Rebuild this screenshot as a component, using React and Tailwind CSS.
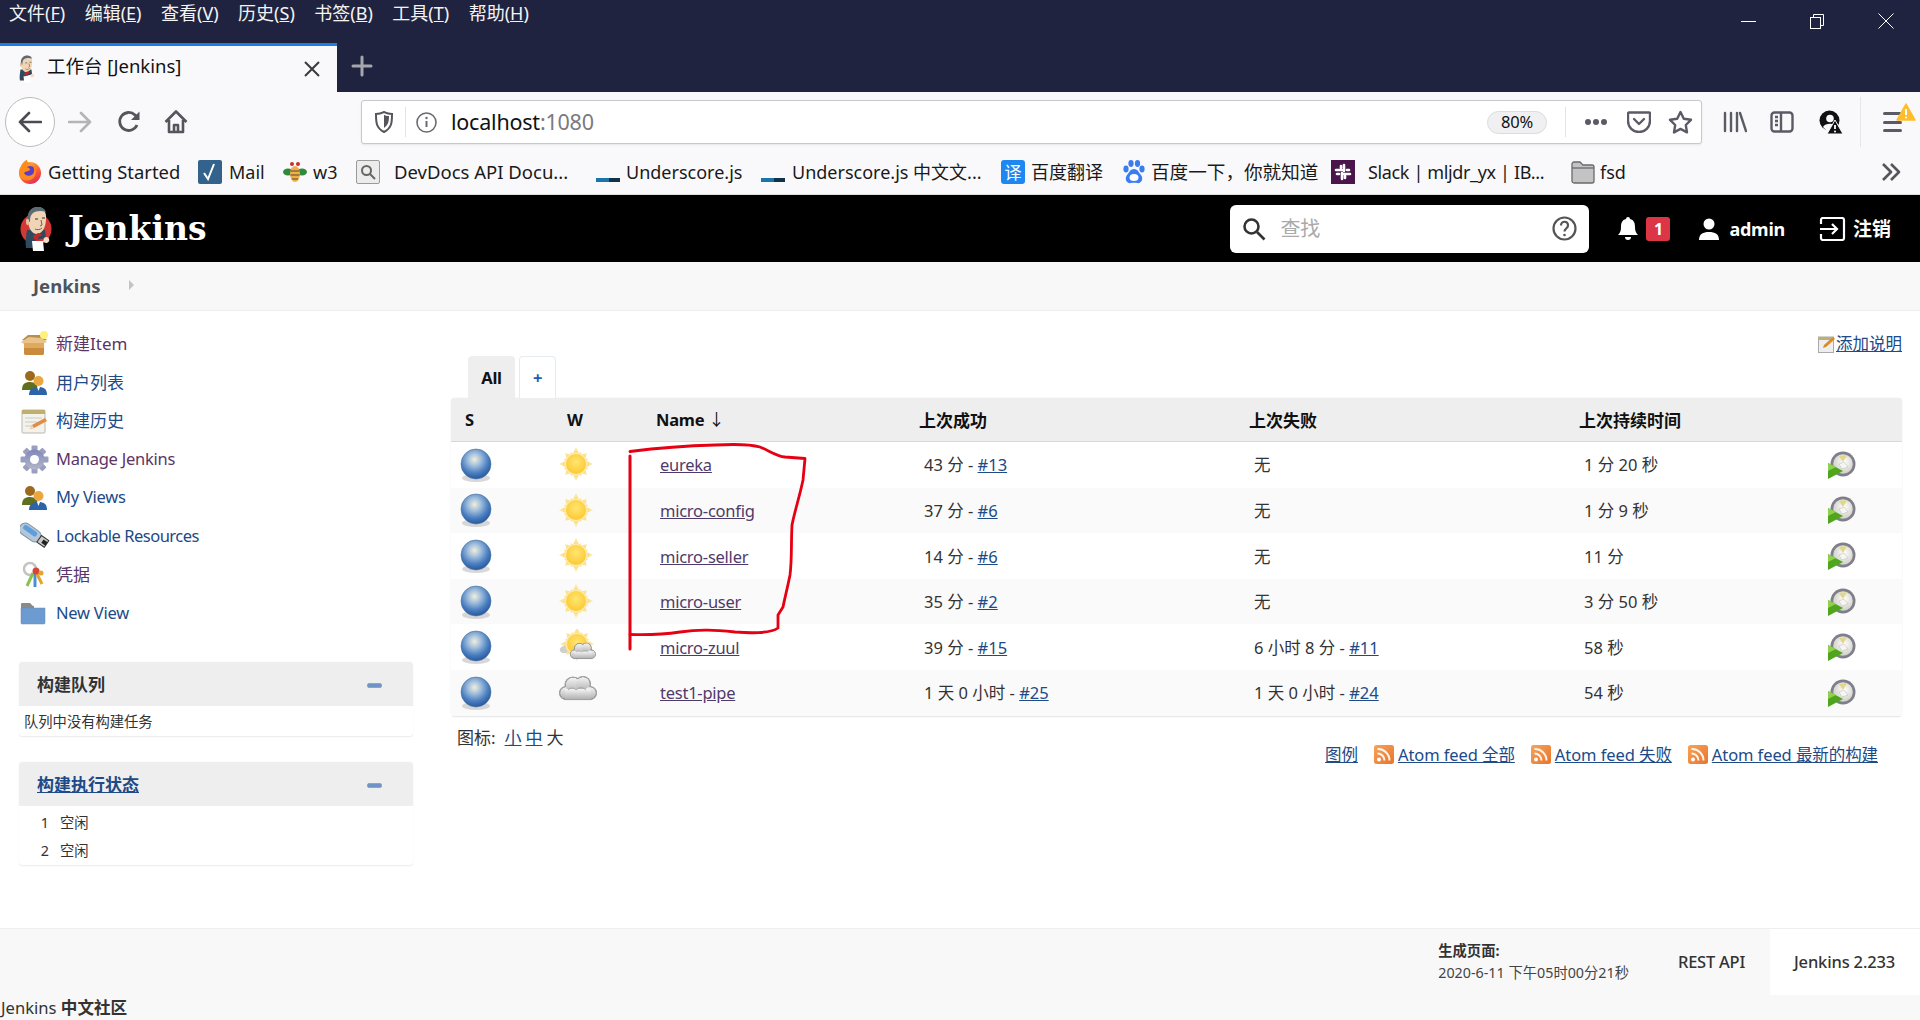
import React from "react";

const Ball = () => (
  <svg width="32" height="36" viewBox="0 0 32 36" className="shrink-0">
    <defs>
      <radialGradient id="ballG" cx="45%" cy="35%" r="65%">
        <stop offset="0" stopColor="#f1efd9" />
        <stop offset="0.3" stopColor="#a9c3de" />
        <stop offset="0.7" stopColor="#4a7fc0" />
        <stop offset="1" stopColor="#28589c" />
      </radialGradient>
    </defs>
    <ellipse cx="16" cy="30" rx="14" ry="4" fill="#b8b8b8" opacity="0.55" />
    <circle cx="16" cy="16" r="15" fill="url(#ballG)" stroke="#47729f" strokeWidth="0.6" />
  </svg>
);

const SunShape = ({ cx = 17, cy = 17 }) => (
  <g transform={`translate(${cx} ${cy})`}>
    {[0, 45, 90, 135, 180, 225, 270, 315].map((a) => (
      <polygon key={a} points={a % 90 === 0 ? "-4,-8 0,-17.500 4,-8" : "-4,-8 0,-15.500 4,-8"} fill="url(#rayG)" transform={`rotate(${a})`} />
    ))}
    {[22, 67, 112, 157, 202, 247, 292, 337].map((a) => (
      <polygon key={a} points="-3,-8 0,-13 3,-8" fill="url(#rayG)" transform={`rotate(${a})`} />
    ))}
    <circle r="11.500" fill="#fde9a8" />
    <circle r="10" fill="url(#sunG)" />
  </g>
);

const SunDefs = () => (
  <defs>
    <radialGradient id="sunG" cx="50%" cy="40%" r="60%">
      <stop offset="0" stopColor="#ffe671" />
      <stop offset="1" stopColor="#fcc933" />
    </radialGradient>
    <radialGradient id="rayG" gradientUnits="userSpaceOnUse" cx="0" cy="0" r="17.500">
      <stop offset="0.55" stopColor="#fcd766" />
      <stop offset="1" stopColor="#fdf1cd" />
    </radialGradient>
    <linearGradient id="cloudG" x1="0" y1="0" x2="0" y2="1">
      <stop offset="0" stopColor="#f4f4f4" />
      <stop offset="1" stopColor="#b2b2b2" />
    </linearGradient>
  </defs>
);

const Sun = () => (
  <svg width="34" height="35" viewBox="0 0 34 35" className="shrink-0">
    <SunDefs />
    <SunShape />
  </svg>
);

const Puffs = ({ scale = 1, x = 0, y = 0 }) => (
  <g transform={`translate(${x} ${y}) scale(${scale})`}>
    <g stroke="#a3a3a3" strokeWidth="1.200">
      <circle cx="7" cy="18" r="6.500" />
      <circle cx="14" cy="10" r="8" />
      <circle cx="24" cy="9" r="7.500" />
      <circle cx="31" cy="18" r="6.500" />
      <rect x="6" y="17" width="26" height="7.500" />
    </g>
    <g fill="url(#cloudG)">
      <circle cx="7" cy="18" r="6" />
      <circle cx="14" cy="10" r="7.500" />
      <circle cx="24" cy="9" r="7" />
      <circle cx="31" cy="18" r="6" />
      <rect x="6" y="14" width="26" height="10" />
    </g>
    <path d="M9 15c3-3 6-2 8 0 3-3 7-3 10 0" fill="none" stroke="#9a9a9a" strokeWidth="0.800" />
  </g>
);

const Cloudy = () => (
  <svg width="38" height="36" viewBox="0 0 38 36" className="shrink-0">
    <SunDefs />
    <path d="M1 22c-1-3 2-5 5-5 2-2 5-1 6 1l-3 6H3z" fill="#cfcfcf" />
    <SunShape cx="18" cy="15" />
    <Puffs x="11" y="13" scale="0.680" />
  </svg>
);

const Cloud = () => (
  <svg width="38" height="36" viewBox="0 0 38 36" className="shrink-0">
    <SunDefs />
    <Puffs />
  </svg>
);

const BuildIcon = () => (
  <svg width="28" height="28" viewBox="0 0 28 28" className="shrink-0">
    <defs>
      <radialGradient id="clkG" cx="55%" cy="40%" r="60%">
        <stop offset="0" stopColor="#ffffff" />
        <stop offset="1" stopColor="#cfcfc6" />
      </radialGradient>
    </defs>
    <circle cx="15" cy="13" r="12.500" fill="#7f7f8c" />
    <circle cx="15" cy="13" r="9.800" fill="url(#clkG)" />
    <polygon points="11,5 19,4 15,11" fill="#e2d68a" />
    <polygon points="11,13 16,11 20,16 14,18" fill="#f7f7f2" stroke="#a8a8a8" strokeWidth="0.400" />
    <polygon points="0,12 15,20 0,28" fill="#4fa51c" />
    <polygon points="0,12 8,16 0,20" fill="#8fd14d" />
  </svg>
);

const BoxIcon = () => (
  <svg width="28" height="26" viewBox="0 0 28 26">
    <path d="M2 9 8 4h14l5 5-13 3z" fill="#b98d50" />
    <path d="M1 11 9 6l12 1 6 4-5 2H4z" fill="#e8c48c" />
    <path d="M4 12h20v10a2 2 0 0 1-2 2H6a2 2 0 0 1-2-2z" fill="#e0a95c" />
    <path d="M4 17h20v5a2 2 0 0 1-2 2H6a2 2 0 0 1-2-2z" fill="#c98b3e" />
    <circle cx="24" cy="4" r="4" fill="#fff27a" />
  </svg>
);

const UsersIcon = () => (
  <svg width="28" height="26" viewBox="0 0 28 26">
    <circle cx="10" cy="6" r="5" fill="#9c6a1e" />
    <path d="M2 20c0-6 3-8 8-8s8 3 8 8z" fill="#5f6e1f" />
    <circle cx="18.500" cy="11" r="5" fill="#eaa640" />
    <path d="M9 25c0-6 4-8 9.500-8S27 19 27 25z" fill="#2d64a8" />
    <path d="m17 17 1.500 4 1.500-4z" fill="#fff" />
  </svg>
);

const NoteIcon = () => (
  <svg width="28" height="26" viewBox="0 0 28 26">
    <rect x="2" y="2" width="23" height="23" rx="1" fill="#f3f3ec" stroke="#b9b9b0" />
    <rect x="2" y="2" width="23" height="4" fill="#c0b070" />
    <path d="M5 10h17M5 14h12M5 18h9" stroke="#c9c9c9" />
    <path d="m10 21 2-4 13-7 2 3-13 7z" fill="#e08c45" />
    <path d="m10 21 2-4 2 3z" fill="#f5d9b5" />
  </svg>
);

const GearIcon = () => (
  <svg width="29" height="29" viewBox="0 0 29 29">
    <defs>
      <linearGradient id="gearG" x1="0" y1="0" x2="0" y2="1">
        <stop offset="0" stopColor="#8087b8" />
        <stop offset="1" stopColor="#b5b6c8" />
      </linearGradient>
    </defs>
    <g transform="translate(14.5 14.5)">
      {[0, 45, 90, 135, 180, 225, 270, 315].map((a) => (
        <rect key={a} x="-3" y="-14" width="6" height="7" rx="1" fill="#9a9fc2" transform={`rotate(${a})`} />
      ))}
      <circle r="10" fill="url(#gearG)" />
      <circle r="4.500" fill="#fff" />
    </g>
  </svg>
);

const UsbIcon = () => (
  <svg width="31" height="28" viewBox="0 0 31 28">
    <g transform="rotate(35 14 12)">
      <rect x="-2" y="7" width="24" height="12" rx="6" fill="#b5c6d6" stroke="#7e94a8" />
      <rect x="1" y="9" width="16" height="5" rx="2.500" fill="#5c9fdc" />
      <rect x="21" y="9" width="9" height="8" fill="#c9c9c9" stroke="#333" />
      <rect x="25" y="11" width="5" height="4" fill="#222" />
    </g>
  </svg>
);

const KeysIcon = () => (
  <svg width="28" height="28" viewBox="0 0 28 28">
    <circle cx="10" cy="8" r="6" fill="none" stroke="#c4c4c4" strokeWidth="2.500" />
    <path d="M13 12 7 25" stroke="#8ac24a" strokeWidth="3" />
    <path d="m15 12 0 14" stroke="#4a90d9" strokeWidth="3" />
    <path d="m16 11 6 12" stroke="#e5a32f" strokeWidth="3" />
    <circle cx="16" cy="10" r="3.500" fill="#d9443a" />
    <circle cx="21" cy="12" r="2.500" fill="#e5a32f" />
  </svg>
);

const FolderIcon = () => (
  <svg width="26" height="24" viewBox="0 0 26 24">
    <path d="M1 3a1 1 0 0 1 1-1h8l3 3h1v5H1z" fill="#8a8a8a" />
    <path d="M1 7h24v15a1 1 0 0 1-1 1H2a1 1 0 0 1-1-1z" fill="#6c9bd1" stroke="#6f88a5" strokeWidth="0.500" />
  </svg>
);

const Rss = () => (
  <svg width="20" height="19" viewBox="0 0 20 19" className="shrink-0">
    <defs>
      <linearGradient id="rssG" x1="0" y1="0" x2="1" y2="1">
        <stop offset="0" stopColor="#f7a35a" />
        <stop offset="1" stopColor="#e8752a" />
      </linearGradient>
    </defs>
    <rect width="20" height="19" rx="2.500" fill="url(#rssG)" />
    <circle cx="5" cy="14.500" r="2" fill="#fff" />
    <path d="M3.500 8.500a7 7 0 0 1 7 7M3.500 4a11.500 11.500 0 0 1 12 11.500" fill="none" stroke="#fff" strokeWidth="2" opacity="0.9" />
  </svg>
);

const Minus = () => <span className="block w-[15px] h-[5px] mt-[3px] rounded-[2px] bg-[#6f93c6] border border-[#8aa5cc]" />;

const JenkinsLogo = ({ w = 32, h = 46, noCircle = false }) => (
  <svg width={w} height={h} viewBox="0 0 32 46" className="shrink-0">
    {!noCircle && <circle cx="16" cy="23" r="15.500" fill="#d33833" />}
    <path d="M7 24c-1 6-2 12-1 18h8l2-8 10-2-1-8z" fill="#2f4a5e" />
    <path d="M8 13C8 5 13 1 18 1s9 5 8 13c-.500 7-3 13-9 14-6 0-9-7-9-15z" fill="#efd4b5" />
    <path d="M8 15C6 6 12 0 18 1c4 0 7 2 8 5-5-2-12-1-14 2-2 2-2 5-2 8z" fill="#5d6b74" />
    <path d="M6 15c0-3 3-3 3 0s-1 5-2 4-1-2-1-4z" fill="#e6c2a0" />
    <path d="M15 13h3M22 12h3" stroke="#333" strokeWidth="1" />
    <path d="M21 14l1 5-2 1M15 23c2 1 5 1 7-1" stroke="#7a5a45" strokeWidth="1" fill="none" />
    <path d="m13 30 5-3 5 2-5 2 1 4-5-2z" fill="#c0282d" />
    <path d="M12 35h11l1 10H13z" fill="#fff" />
    <path d="M24 32c2-2 5-1 5 1 1 2-1 4-3 4l-3-1z" fill="#f2dcc4" />
  </svg>
);

const ArrowL = ({ color = "#4b4b55" }) => (
  <svg width="24" height="24" viewBox="0 0 24 24" fill="none" stroke={color} strokeWidth="2.600" strokeLinecap="round" strokeLinejoin="round">
    <path d="M23 12H2M11 3l-9 9 9 9" />
  </svg>
);
const ArrowR = () => (
  <svg width="24" height="24" viewBox="0 0 24 24" fill="none" stroke="#b4b4b8" strokeWidth="2.600" strokeLinecap="round" strokeLinejoin="round">
    <path d="M1 12h21M13 3l9 9-9 9" />
  </svg>
);
const Reload = () => (
  <svg width="24" height="24" viewBox="0 0 24 24" fill="none" stroke="#55555c" strokeWidth="2.800">
    <path d="M20 15a9 9 0 1 1-2-10l3 3" />
    <path d="M22.500 1.500V10H14z" fill="#55555c" stroke="none" />
  </svg>
);
const HomeI = () => (
  <svg width="24" height="24" viewBox="0 0 24 24" fill="none" stroke="#55555c" strokeWidth="2.600" strokeLinejoin="round">
    <path d="M1.500 12 12 1.500 22.500 12M5 10v12h14V10" />
    <path d="M10 22v-7h4v7" />
  </svg>
);
const ShieldI = () => (
  <svg width="18" height="22" viewBox="0 0 18 22">
    <path d="M1 3c5 0 6-1 8-2 2 1 3 2 8 2 0 8 0 14-8 18C1 17 1 11 1 3z" fill="none" stroke="#55555c" strokeWidth="2" />
    <path d="M9 4c1 .5 3 1 5 1 0 6-1 9-5 12z" fill="#55555c" />
  </svg>
);
const InfoI = () => (
  <svg width="21" height="21" viewBox="0 0 21 21" fill="none" stroke="#6a6a70" strokeWidth="1.600">
    <circle cx="10.500" cy="10.500" r="9.500" />
    <path d="M10.500 9v6" strokeWidth="2" />
    <circle cx="10.500" cy="6" r="1.200" fill="#6a6a70" stroke="none" />
  </svg>
);
const Dots = () => (
  <svg width="24" height="8" viewBox="0 0 24 8" fill="#5b5b66">
    <circle cx="4" cy="4" r="3" /><circle cx="12" cy="4" r="3" /><circle cx="20" cy="4" r="3" />
  </svg>
);
const Pocket = () => (
  <svg width="24" height="22" viewBox="0 0 24 22" fill="none" stroke="#5b5b66" strokeWidth="2.400" strokeLinecap="round" strokeLinejoin="round">
    <path d="M2 1.500h20a1 1 0 0 1 1 1V10a11 11 0 0 1-22 0V2.500a1 1 0 0 1 1-1z" />
    <path d="m7 8 5 5 5-5" />
  </svg>
);
const StarI = () => (
  <svg width="25" height="24" viewBox="0 0 25 24" fill="none" stroke="#5b5b66" strokeWidth="2.400" strokeLinejoin="round">
    <path d="m12.500 2 3.300 6.800 7.200 1-5.200 5.200 1.200 7.400-6.500-3.500-6.500 3.500L7.200 15 2 9.800l7.200-1z" />
  </svg>
);
const Library = () => (
  <svg width="24" height="22" viewBox="0 0 24 22" fill="none" stroke="#5b5b66" strokeWidth="2.400" strokeLinecap="round">
    <path d="M2 2v18M8 2v18M14 2v18M17 2l6 18" />
  </svg>
);
const SidebarI = () => (
  <svg width="24" height="22" viewBox="0 0 24 22" fill="none" stroke="#5b5b66" strokeWidth="2.400">
    <rect x="1.500" y="1.500" width="21" height="19" rx="3" />
    <path d="M11 2v18M5 6h3M5 10h3M5 14h3" />
  </svg>
);
const AccountWarn = () => (
  <svg width="24" height="24" viewBox="0 0 24 24">
    <circle cx="10.500" cy="10.500" r="10" fill="#111" />
    <circle cx="11" cy="8.500" r="3.800" fill="#f9f9fb" />
    <path d="M4 17c2-4 11-4 13-1l-3 5H8z" fill="#f9f9fb" />
    <path d="m16 10 8 14H8z" fill="#111" stroke="#f9f9fb" strokeWidth="1" />
    <path d="M16 15v4" stroke="#fff" strokeWidth="1.800" />
    <circle cx="16" cy="21.500" r="1" fill="#fff" />
  </svg>
);
const Hamburger = () => (
  <div className="relative w-[19px] h-[20px] flex flex-col justify-between">
    <span className="block h-[3px] bg-[#5b5b66] rounded-sm" />
    <span className="block h-[3px] bg-[#5b5b66] rounded-sm" />
    <span className="block h-[3px] bg-[#5b5b66] rounded-sm" />
    <svg width="20" height="18" viewBox="0 0 20 18" className="absolute left-[13px] top-[-9px]">
      <path d="M10 1 19 17H1z" fill="#ffbd2e" stroke="#ffbd2e" strokeWidth="1.500" strokeLinejoin="round" />
      <path d="M10 6v6" stroke="#fff" strokeWidth="2" />
      <circle cx="10" cy="14.500" r="1.100" fill="#fff" />
    </svg>
  </div>
);

const Firefox = () => (
  <svg width="22" height="24" viewBox="0 0 22 24">
    <defs>
      <linearGradient id="ffG" x1="0.2" y1="0" x2="0.8" y2="1">
        <stop offset="0" stopColor="#ffbd2e" />
        <stop offset="0.5" stopColor="#ff6a2e" />
        <stop offset="1" stopColor="#e0245e" />
      </linearGradient>
    </defs>
    <circle cx="11" cy="13" r="11" fill="url(#ffG)" />
    <circle cx="11" cy="12" r="6" fill="#5b3ec8" />
    <path d="M2 6c2-4 5-6 6-6 0 3 3 3 5 5-3-1-5 0-6 2 2 0 4 1 4 3-2 2-5 1-6 3 1 3 6 4 9 1 2-3 1-6 0-9 3 3 4 7 2 11-3 5-10 6-14 2C-1 15 0 9 2 6z" fill="#ff8a1e" />
  </svg>
);
const MailI = () => (
  <span className="flex items-center justify-center w-[24px] h-[24px] bg-[#33628c] rounded-[2px]">
    <svg width="16" height="18" viewBox="0 0 16 18" fill="none" stroke="#fff" strokeWidth="2"><path d="m2 10 4 6 6-15" /></svg>
  </span>
);
const Bee = () => (
  <svg width="24" height="22" viewBox="0 0 24 22">
    <ellipse cx="5" cy="11" rx="5" ry="3.500" fill="#2f8a3c" />
    <ellipse cx="19" cy="11" rx="5" ry="3.500" fill="#2f8a3c" />
    <ellipse cx="12" cy="13" rx="5" ry="8" fill="#efb04a" />
    <path d="M7.500 10h9M7.500 14h9M9 18h6" stroke="#8a6a3a" strokeWidth="1.400" />
    <circle cx="9" cy="3" r="2" fill="#c9302c" />
    <circle cx="15" cy="3" r="2" fill="#c9302c" />
  </svg>
);
const DevDocs = () => (
  <span className="flex items-center justify-center w-[24px] h-[24px] bg-[#ececec] border border-[#9a9a9a] rounded-[2px]">
    <svg width="16" height="16" viewBox="0 0 16 16" fill="none" stroke="#666" strokeWidth="2"><circle cx="6.500" cy="6.500" r="4.500" /><path d="m10 10 5 5" /></svg>
  </span>
);
const UnderscoreI = () => (
  <span className="flex w-[24px] h-[4px] mt-[18px] mb-[2px]">
    <span className="w-[13px] h-full bg-[#1a76a8]" />
    <span className="w-[11px] h-full bg-[#123247]" />
  </span>
);
const Translate = () => (
  <span className="flex items-center justify-center w-[24px] h-[24px] bg-[#1e88f0] rounded-[3px] text-white text-[17px] leading-none">译</span>
);
const Paw = () => (
  <svg width="22" height="24" viewBox="0 0 22 24" fill="#3a7df0">
    <ellipse cx="3" cy="9" rx="2.600" ry="3.400" />
    <ellipse cx="8" cy="3.500" rx="2.600" ry="3.400" />
    <ellipse cx="14.500" cy="3.500" rx="2.600" ry="3.400" />
    <ellipse cx="19" cy="9" rx="2.600" ry="3.400" />
    <path d="M11 9c4 0 5 4 7 6 3 4 0 9-4 8-2-.500-4-.500-6 0-4 1-7-4-4-8 2-2 3-6 7-6z" />
    <ellipse cx="11" cy="17.500" rx="4.500" ry="3.500" fill="#fff" />
  </svg>
);
const Slack = () => (
  <span className="flex items-center justify-center w-[24px] h-[24px] bg-[#4a154b]">
    <svg width="18" height="18" viewBox="0 0 18 18" stroke="#fff" strokeWidth="2.600" strokeLinecap="round">
      <path d="M2 7h6M10 2v6M16 11h-6M8 16v-6M13 7h2M5 11H3M11 13v2M7 5V3" />
    </svg>
  </span>
);
const BmFolder = () => (
  <svg width="24" height="24" viewBox="0 0 24 24">
    <path d="M1 4a2 2 0 0 1 2-2h6l3 3h9a2 2 0 0 1 2 2v14a2 2 0 0 1-2 2H3a2 2 0 0 1-2-2z" fill="#c3c3c3" stroke="#6a6a6a" strokeWidth="1.300" />
    <path d="M1 8h22" stroke="#6a6a6a" strokeWidth="1.300" />
  </svg>
);

const menus = [["文件", "F"], ["编辑", "E"], ["查看", "V"], ["历史", "S"], ["书签", "B"], ["工具", "T"], ["帮助", "H"]];

const bookmarks = [
  { c: "w-[179px] gap-[7px] text-[18.4px]", i: <Firefox />, t: "Getting Started" },
  { c: "w-[85px] gap-[7px]", i: <MailI />, t: "Mail" },
  { c: "w-[73px] gap-[6px]", i: <Bee />, t: "w3" },
  { c: "w-[240px] gap-[14px] text-[18.5px]", i: <DevDocs />, t: "DevDocs API Docu..." },
  { c: "w-[165px] gap-[6px]", i: <UnderscoreI />, t: "Underscore.js" },
  { c: "w-[240px] gap-[7px]", i: <UnderscoreI />, t: "Underscore.js 中文文..." },
  { c: "w-[122px] gap-[6px]", i: <Translate />, t: "百度翻译" },
  { c: "w-[208px] gap-[6px] text-[18.6px]", i: <Paw />, t: "百度一下，你就知道" },
  { c: "w-[240px] gap-[13px] tracking-[-0.02em]", i: <Slack />, t: "Slack | mljdr_yx | IB..." },
  { c: "w-[90px] gap-[5px]", i: <BmFolder />, t: "fsd" },
];

const side = [
  { i: <BoxIcon />, t: "新建Item", c: "text-[#5c3566] text-[17px] tracking-normal" },
  { i: <UsersIcon />, t: "用户列表", c: "text-[#204a87] text-[17px] tracking-normal" },
  { i: <NoteIcon />, t: "构建历史", c: "text-[#204a87] text-[17px] tracking-normal" },
  { i: <GearIcon />, t: "Manage Jenkins", c: "text-[#5c3566]" },
  { i: <UsersIcon />, t: "My Views", c: "text-[#204a87]" },
  { i: <UsbIcon />, t: "Lockable Resources", c: "text-[#204a87] tracking-[-0.03em]" },
  { i: <KeysIcon />, t: "凭据", c: "text-[#5c3566] text-[17px] tracking-normal" },
  { i: <FolderIcon />, t: "New View", c: "text-[#204a87]" },
];

const rows = [
  { w: <Sun />, n: "eureka", s: "43 分", sn: "#13", f: "无", fn: "", d: "1 分 20 秒" },
  { w: <Sun />, n: "micro-config", s: "37 分", sn: "#6", f: "无", fn: "", d: "1 分 9 秒" },
  { w: <Sun />, n: "micro-seller", s: "14 分", sn: "#6", f: "无", fn: "", d: "11 分" },
  { w: <Sun />, n: "micro-user", s: "35 分", sn: "#2", f: "无", fn: "", d: "3 分 50 秒" },
  { w: <Cloudy />, n: "micro-zuul", s: "39 分", sn: "#15", f: "6 小时 8 分", fn: "#11", d: "58 秒" },
  { w: <Cloud />, n: "test1-pipe", s: "1 天 0 小时", sn: "#25", f: "1 天 0 小时", fn: "#24", d: "54 秒" },
];

const COLS = "grid grid-cols-[100px_100px_263px_330px_330px_244px_84px]";

export default function App() {
  return (
    <div className="relative w-[1920px] h-[1020px] overflow-hidden bg-white text-[#333] font-['Noto_Sans','Noto_Sans_CJK_SC',sans-serif] text-[16.5px] tracking-[-0.015em]">
      {/* title bar */}
      <div className="h-[92px] bg-[#20233f] flex flex-col">
        <div className="h-[43px] flex items-start text-white">
          <div className="flex gap-[19.5px] pl-[9px] text-[18px] leading-[27px] text-[#f4f4f4] tracking-normal">
            {menus.map(([a, b]) => (
              <span key={b}>{a}(<u>{b}</u>)</span>
            ))}
          </div>
          <div className="ml-auto flex items-center gap-[54px] pr-[26px] pt-[13px]">
            <span className="block w-[15px] h-px bg-white" />
            <svg width="14" height="15" viewBox="0 0 14 15" fill="none" stroke="#fff"><rect x="0.500" y="3.500" width="10" height="11" /><path d="M3.500 3.500v-3h10v11h-3" /></svg>
            <svg width="16" height="16" viewBox="0 0 16 16" fill="none" stroke="#fff"><path d="m.5.5 15 15M15.500.5l-15 15" /></svg>
          </div>
        </div>
        <div className="h-[49px] flex items-stretch">
          <div className="w-[337px] bg-[#f9f9fb] border-t-[3px] border-[#1a7de8] flex items-center pl-[15px] text-[18.5px] text-[#111] tracking-normal">
            <JenkinsLogo w={22} h={28} noCircle />
            <span className="ml-[10px] mb-[7px] whitespace-nowrap">工作台 [Jenkins]</span>
            <svg width="16" height="16" viewBox="0 0 16 16" className="ml-auto mr-[17px]" stroke="#3a3a3a" strokeWidth="2"><path d="m1 1 14 14M15 1 1 15" /></svg>
          </div>
          <div className="flex items-center pl-[14px] pb-[3px]">
            <svg width="22" height="22" viewBox="0 0 22 22" stroke="#a6a6ad" strokeWidth="3" strokeLinecap="round"><path d="M11 2v18M2 11h18" /></svg>
          </div>
        </div>
      </div>

      {/* toolbar */}
      <div className="h-[60px] bg-[#f9f9fb] flex items-center">
        <div className="ml-[5px] w-[50px] h-[50px] rounded-full border border-[#bcbcbc] bg-white flex items-center justify-center"><ArrowL /></div>
        <div className="ml-[13px] w-[24px] flex"><ArrowR /></div>
        <div className="ml-[25px] w-[24px] flex"><Reload /></div>
        <div className="ml-[23px] w-[24px] flex"><HomeI /></div>
        <div className="ml-[173px] w-[1341px] h-[44px] bg-white border border-[#c8c8cc] rounded-[3px] shadow-[0_1px_2px_rgba(0,0,0,0.08)] flex items-center pl-[13px] pr-[8px]">
          <ShieldI />
          <span className="ml-[12px] w-px h-[30px] bg-[#e3e3e3]" />
          <span className="ml-[10px] flex"><InfoI /></span>
          <span className="ml-[14px] text-[21.5px] text-[#111] tracking-[-0.01em]">localhost<span className="text-[#7a7a80]">:1080</span></span>
          <span className="ml-auto w-[60px] h-[23px] rounded-full bg-[#f0f0f2] border border-[#dcdcdc] flex items-center justify-center text-[16.5px] text-[#111]">80%</span>
          <span className="ml-[18px] w-px h-[30px] bg-[#e3e3e3]" />
          <span className="ml-[18px] flex"><Dots /></span>
          <span className="ml-[19px] flex"><Pocket /></span>
          <span className="ml-[17px] flex"><StarI /></span>
        </div>
        <div className="ml-[21px] flex"><Library /></div>
        <div className="ml-[23px] flex"><SidebarI /></div>
        <div className="ml-[25px] flex"><AccountWarn /></div>
        <span className="ml-[17px] w-px h-[50px] bg-[#e6e6e6]" />
        <div className="ml-[22px] flex"><Hamburger /></div>
      </div>

      {/* bookmarks */}
      <div className="h-[43px] bg-[#f9f9fb] border-b border-[#dedede] flex items-center pl-[19px] pb-[2px] text-[18px] text-[#1a1a1a] whitespace-nowrap tracking-normal">
        {bookmarks.map((b) => (
          <div key={b.t} className={`flex items-center shrink-0 ${b.c}`}>
            <span className="flex shrink-0">{b.i}</span>
            <span>{b.t}</span>
          </div>
        ))}
        <svg width="20" height="20" viewBox="0 0 20 20" fill="none" stroke="#55555c" strokeWidth="2.600" strokeLinejoin="round" className="ml-[220px]"><path d="m2 2 8 8-8 8M10 2l8 8-8 8" /></svg>
      </div>

      {/* jenkins header */}
      <header className="h-[67px] bg-black flex items-center text-white pr-[29px]">
        <div className="ml-[20px] flex"><JenkinsLogo /></div>
        <span className="ml-[16px] font-['DejaVu_Serif',serif] font-bold text-[33px] leading-none tracking-normal">Jenkins</span>
        <div className="ml-auto w-[359px] h-[48px] bg-white rounded-[6px] flex items-center pl-[12px] pr-[12px] text-[20px] text-[#aaa]">
          <svg width="24" height="24" viewBox="0 0 24 24" fill="none" stroke="#333" strokeWidth="2.600"><circle cx="9.500" cy="9.500" r="7" /><path d="m15 15 7.500 7.500" /></svg>
          <span className="ml-[14px]">查找</span>
          <svg width="25" height="25" viewBox="0 0 25 25" fill="none" stroke="#555" strokeWidth="2.200" className="ml-auto"><circle cx="12.500" cy="12.500" r="11" /><path d="M9 9.500c0-5 7-5 7 0 0 3-3.500 3-3.500 6" /><circle cx="12.500" cy="19" r="1.300" fill="#555" stroke="none" /></svg>
        </div>
        <svg width="20" height="24" viewBox="0 0 20 24" fill="#fff" className="ml-[29px]"><path d="M10 0a2 2 0 0 1 2 2c4 1 5 4 5 8 0 4 1 6 3 8H0c2-2 3-4 3-8 0-4 1-7 5-8a2 2 0 0 1 2-2z" /><path d="M7 20h6a3 3 0 0 1-6 0z" /></svg>
        <span className="ml-[8px] w-[24px] h-[24px] rounded-[3px] bg-[#dc3545] flex items-center justify-center font-bold text-[16px]">1</span>
        <svg width="22" height="22" viewBox="0 0 22 22" fill="#fff" className="ml-[28px]"><circle cx="11" cy="6" r="5.500" /><path d="M1 22c0-6 4-8 10-8s10 2 10 8z" /></svg>
        <span className="ml-[9px] pt-[2px] font-bold text-[18px]">admin</span>
        <svg width="27" height="24" viewBox="0 0 27 24" fill="none" stroke="#fff" strokeWidth="2.200" className="ml-[34px]"><path d="M2 7V3a2 2 0 0 1 2-2h19a2 2 0 0 1 2 2v18a2 2 0 0 1-2 2H4a2 2 0 0 1-2-2v-4" /><path d="M1 12h16M13 7l5 5-5 5" /></svg>
        <span className="ml-[7px] pt-[2px] font-bold text-[19px] tracking-normal">注销</span>
      </header>

      {/* breadcrumb */}
      <div className="h-[49px] bg-[#f8f8f8] border-b border-[#eeeeee] flex items-center pl-[33px] text-[18.5px] font-bold text-[#4d545d] tracking-normal">
        <span>Jenkins</span>
        <span className="ml-[28px] mb-[2px] w-0 h-0 border-y-[5px] border-y-transparent border-l-[5px] border-l-[#c4c4c4]" />
      </div>

      {/* main */}
      <main className="h-[617px] flex">
        <aside className="w-[451px] shrink-0 pl-[19px] pr-[38px] pt-[14px]">
          <nav>
            {side.map((s) => (
              <div key={s.t} className="h-[38.4px] flex items-center">
                <span className="w-[37px] shrink-0 flex items-center pl-px">{s.i}</span>
                <span className={s.c}>{s.t}</span>
              </div>
            ))}
          </nav>
          <section className="mt-[30px] rounded-[4px] border-b border-[#eeeeee] shadow-[0_0_1px_rgba(0,0,0,0.15)]">
            <div className="h-[44px] bg-[#eeeeee] rounded-t-[4px] flex items-center pl-[18px] pr-[31px] font-bold text-[#333] text-[17px] tracking-normal">
              <span className="pt-[2px]">构建队列</span><span className="ml-auto"><Minus /></span>
            </div>
            <div className="h-[30px] pl-[5px] pt-[2px] flex items-center text-[14.3px] tracking-normal">队列中没有构建任务</div>
          </section>
          <section className="mt-[25px] rounded-[4px] border-b border-[#eeeeee] shadow-[0_0_1px_rgba(0,0,0,0.15)]">
            <div className="h-[44px] bg-[#eeeeee] rounded-t-[4px] flex items-center pl-[18px] pr-[31px] font-bold text-[17px] tracking-normal">
              <span className="pt-[2px] underline text-[#204a87]">构建执行状态</span><span className="ml-auto"><Minus /></span>
            </div>
            <div className="pt-[3px] text-[14.3px] tracking-normal">
              <div className="h-[28px] flex items-center"><span className="w-[30px] text-right">1</span><span className="ml-[11px]">空闲</span></div>
              <div className="h-[28px] flex items-center"><span className="w-[30px] text-right">2</span><span className="ml-[11px]">空闲</span></div>
            </div>
          </section>
        </aside>

        <div className="w-[1451px] shrink-0">
          <div className="mt-[22px] h-[22px] flex justify-end items-center">
            <svg width="18" height="18" viewBox="0 0 18 18"><rect x="0.500" y="2" width="15" height="15.500" fill="#eee" stroke="#aaa" /><rect x="0.500" y="2" width="15" height="3" fill="#c0b070" /><path d="m5 13 1-3 9-8 2 2-9 8z" fill="#d98b2b" /></svg>
            <a className="underline text-[#204a87] tracking-normal leading-none">添加说明</a>
          </div>
          <div className="mt-[1px] h-[42px] pl-[17px] flex items-end gap-[4px] font-bold">
            <span className="w-[47px] h-[42px] pt-[2px] bg-[#eeeeee] rounded-t-[4px] flex items-center justify-center text-[#111]">All</span>
            <span className="w-[37px] h-[42px] pt-[2px] bg-white border border-b-0 border-[#e4ebf2] rounded-t-[4px] flex items-center justify-center text-[#1d5fa8]">+</span>
          </div>
          <div className="w-[1451px] rounded-[4px] border-b border-[#e8e8e8] shadow-[0_0_1px_rgba(0,0,0,0.2)]">
            <div className={`${COLS} h-[44px] items-center bg-[#eeeeee] border-b border-[#d8d8d8] rounded-t-[4px] font-bold text-[#111]`}>
              <span className="pl-[14px] pt-[2px]">S</span>
              <span className="pl-[16px] pt-[2px]">W</span>
              <span className="pl-[5px] pt-[2px]">Name <span className="font-normal">↓</span></span>
              <span className="pl-[5px] pt-[2px] text-[17px] tracking-normal">上次成功</span>
              <span className="pl-[5px] pt-[2px] text-[17px] tracking-normal">上次失败</span>
              <span className="pl-[5px] pt-[2px] text-[17px] tracking-normal">上次持续时间</span>
              <span />
            </div>
            {rows.map((r, i) => (
              <div key={r.n} className={`${COLS} h-[45.6px] items-center tracking-normal ${i % 2 === 1 ? "bg-[#fafafa]" : "bg-white"}`}>
                <span className="pl-[9px] flex pt-[2px]"><Ball /></span>
                <span className="pl-[8px] flex">{r.w}</span>
                <span className="pl-[9px] pt-[2px]"><a className="underline text-[#4f3b6b] tracking-[-0.015em]">{r.n}</a></span>
                <span className="pl-[10px] pt-[2px]">{r.s} - <a className="underline text-[#204a87]">{r.sn}</a></span>
                <span className="pl-[10px] pt-[2px]">{r.f}{r.fn && <> - <a className="underline text-[#204a87]">{r.fn}</a></>}</span>
                <span className="pl-[10px] pt-[2px]">{r.d}</span>
                <span className="pl-[10px] flex"><BuildIcon /></span>
              </div>
            ))}
          </div>
          <div className="flex items-start">
            <div className="pl-[6px] pt-[10px] leading-[22px] text-[17px] tracking-normal">
              图标:<span className="ml-[9px] underline text-[#204a87]">小</span><span className="ml-[4px] underline text-[#204a87]">中</span><span className="ml-[4px]">大</span>
            </div>
            <div className="ml-auto pr-[24px] pt-[27px] flex items-center leading-[22px] text-[#204a87] tracking-[-0.005em]">
              <a className="underline">图例</a>
              <span className="ml-[16px] mr-[4px] flex"><Rss /></span><a className="underline">Atom feed 全部</a>
              <span className="ml-[16px] mr-[4px] flex"><Rss /></span><a className="underline">Atom feed 失败</a>
              <span className="ml-[16px] mr-[4px] flex"><Rss /></span><a className="underline">Atom feed 最新的构建</a>
            </div>
          </div>
        </div>
      </main>

      {/* footer */}
      <footer className="h-[92px] bg-[#f8f8f8] border-t border-[#eeeeee] relative">
        <div className="h-[66px] flex justify-end items-stretch">
          <div className="flex flex-col justify-center text-[14.3px] tracking-normal mr-[49px]">
            <span className="font-bold leading-[22px]">生成页面:</span>
            <span className="leading-[22px] text-[#444]">2020-6-11 下午05时00分21秒</span>
          </div>
          <div className="flex items-center font-medium text-[16.5px] mr-[25px]">REST API</div>
          <div className="w-[150px] bg-white flex items-center pl-[24px] font-medium whitespace-nowrap tracking-[-0.01em]">Jenkins 2.233</div>
        </div>
        <div className="mt-[2px] pl-px leading-[22px] text-[#333] text-[16.6px] tracking-normal">Jenkins <b>中文社区</b></div>
      </footer>

      {/* hand-drawn annotation */}
      <svg className="absolute left-0 top-0 pointer-events-none" width="1920" height="1020" fill="none" stroke="#e60012" strokeWidth="2.800" strokeLinecap="round" strokeLinejoin="round">
        <path d="M630 451.500C650 449 680 446 715 445 735 444 750 444 760 447 770 451 776 456 785 457L805 458.500 803 480C800 495 795 510 792 525 791 545 792 560 790 575 787 590 785 597 783 607L778 615 778 628C770 634 750 633 735 632 715 630 700 629 680 632 660 635 645 635 630 634.500" />
        <path d="M630 456V649" strokeWidth="3" />
      </svg>
    </div>
  );
}
